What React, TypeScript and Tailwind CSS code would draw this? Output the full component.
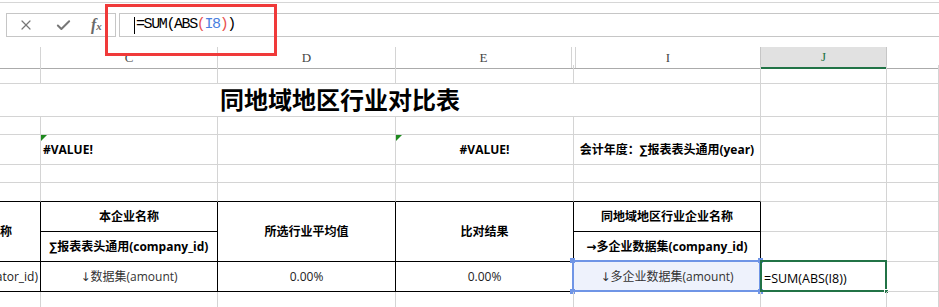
import { X, Check } from 'lucide-react';
import { twMerge } from 'tailwind-merge';

const sans = "font-['Open_Sans','Noto_Sans_CJK_SC',sans-serif]";

function Cell({ className = '', children }: { className?: string; children?: React.ReactNode }) {
  return (
    <div
      className={twMerge(
        'relative flex items-center justify-center overflow-hidden whitespace-nowrap border-r border-b border-[#d4d4d4] text-[12px] text-[#222]',
        className
      )}
    >
      {children}
    </div>
  );
}

function ErrMark() {
  return <span className="absolute left-0 top-0 h-0 w-0 border-t-[6px] border-r-[6px] border-t-[#1f8a1f] border-r-transparent" />;
}

function Handle({ className }: { className: string }) {
  return <span className={twMerge('absolute h-[5px] w-[5px]', className)} />;
}

// narrow arrows, the CJK font draws them full width
function Arrow({ c }: { c: string }) {
  return <span className="font-['DejaVu_Sans',sans-serif]">{c}</span>;
}

export default function App() {
  return (
    <div className={`relative h-[307px] w-[939px] overflow-hidden bg-white ${sans}`}>
      {/* formula bar */}
      <div className="h-[2px]" />
      <div className="h-px bg-[#d6d6d6]" />
      <div className="mt-[10px] flex h-[24px]">
        <div className="ml-[6px] flex w-[110px] items-center border border-[#c6c6c6] text-[#777]">
          <X size={16} strokeWidth={1.8} className="ml-[11px]" />
          <Check size={17} strokeWidth={2.8} className="ml-[21px]" />
          <span className="ml-[19px] font-['Liberation_Serif',serif] text-[16px] font-bold italic leading-none text-[#6a6a6a]">
            f<span className="text-[11px]">x</span>
          </span>
        </div>
        <div className="ml-[3px] flex flex-1 items-center border border-r-0 border-[#c6c6c6] pl-[14px]">
          <span className="mr-px h-[17px] w-px bg-black" />
          <span className="font-['Liberation_Mono',monospace] text-[15px] tracking-[-1.4px] text-black">
            =SUM(ABS<span className="text-[#e8504f]">(</span>
            <span className="text-[#4a7fe0]">I8</span>
            <span className="text-[#e8504f]">)</span>)
          </span>
        </div>
      </div>

      {/* column headers */}
      <div className="mt-[10px] grid h-[18px] grid-cols-[41px_177px_178px_178px_187px_126px_1fr] font-['Liberation_Serif',serif] text-[13px] text-[#444]">
        <div className="border-r border-b border-r-[#d4d4d4] border-b-[#ababab]" />
        <div className="flex items-center justify-center border-r border-b border-r-[#d4d4d4] border-b-[#ababab]">C</div>
        <div className="flex items-center justify-center border-r border-b border-r-[#d4d4d4] border-b-[#ababab]">D</div>
        <div className="flex border-b border-[#ababab]">
          <div className="mr-[2px] flex flex-1 items-center justify-center border-r border-[#d4d4d4]">E</div>
        </div>
        <div className="flex border-r border-b border-r-[#c6c6c6] border-b-[#ababab]">
          <div className="ml-px flex flex-1 items-center justify-center border-l border-[#d4d4d4]">I</div>
        </div>
        <div className="flex items-center justify-center border-r border-b-2 border-r-[#c6c6c6] border-b-[#217346] bg-[#e1e1e1] text-[#217346]">J</div>
        <div className="border-b border-[#ababab]" />
      </div>

      {/* sheet */}
      <div className="grid grid-cols-[41px_177px_178px_178px_187px_126px_1fr] grid-rows-[19px_33px_18px_30px_18px_19px_30px_30px_30px_20px]">
        {/* row 1 */}
        <Cell /><Cell /><Cell /><Cell /><Cell /><Cell /><Cell />

        {/* row 2: title */}
        <Cell className="col-span-5 justify-start pl-[220px] text-[24px] font-bold text-black">同地域地区行业对比表</Cell>
        <Cell /><Cell />

        {/* row 3 */}
        <Cell /><Cell /><Cell /><Cell /><Cell /><Cell /><Cell />

        {/* row 4 */}
        <Cell />
        <Cell className="justify-start pl-[2px] font-bold text-black">
          <ErrMark />#VALUE!
        </Cell>
        <Cell />
        <Cell className="font-bold text-black">
          <ErrMark />#VALUE!
        </Cell>
        <Cell className="font-bold text-black">会计年度：∑报表表头通用(year)</Cell>
        <Cell /><Cell />

        {/* row 5 */}
        <Cell /><Cell /><Cell /><Cell /><Cell /><Cell /><Cell />

        {/* row 6: table top edge */}
        <Cell className="border-b-black" />
        <Cell className="border-b-black" />
        <Cell className="border-b-black" />
        <Cell className="border-b-black" />
        <Cell className="border-b-black" />
        <Cell /><Cell />

        {/* row 7 */}
        <Cell className="row-span-2 justify-end border-black pr-[28px] font-bold text-black">称</Cell>
        <Cell className="border-black font-bold text-black">本企业名称</Cell>
        <Cell className="row-span-2 border-black font-bold text-black">所选行业平均值</Cell>
        <Cell className="row-span-2 border-black font-bold text-black">比对结果</Cell>
        <Cell className="border-black font-bold text-black">同地域地区行业企业名称</Cell>
        <Cell /><Cell />

        {/* row 8 */}
        <Cell className="border-black font-bold text-black">∑报表表头通用(company_id)</Cell>
        <Cell className="border-black font-bold text-black">
          <Arrow c="→" />多企业数据集(company_id)
        </Cell>
        <Cell /><Cell />

        {/* row 9 */}
        <Cell className="justify-end border-black pr-[2px]">ator_id)</Cell>
        <Cell className="border-black text-[#333]">
          <Arrow c="↓" />数据集(amount)
        </Cell>
        <Cell className="border-black">0.00%</Cell>
        <Cell className="border-black">0.00%</Cell>
        <Cell className="overflow-visible border-black bg-[#eef2fc] text-[#333]">
          <Arrow c="↓" />多企业数据集(amount)
          <span className="absolute -left-[2px] -top-[2px] -right-[1px] -bottom-[1px] border-2 border-[#6f95e6]" />
          <Handle className="-left-[4px] -top-[4px] bg-[#6f95e6]" />
          <Handle className="-right-[3px] -top-[4px] bg-[#6f95e6]" />
          <Handle className="-left-[4px] -bottom-[3px] bg-[#6f95e6]" />
          <Handle className="-right-[3px] -bottom-[3px] bg-[#6f95e6]" />
        </Cell>
        <Cell className="items-end justify-start overflow-visible pb-[2px] pl-[3px] text-[12.5px] text-black">
          =SUM(ABS(I8))
          <span className="absolute -left-[1px] -top-[2px] -right-[1px] -bottom-[1px] border-2 border-[#217346]" />
          <Handle className="-right-[3px] -bottom-[3px] border border-white bg-[#217346]" />
        </Cell>
        <Cell />

        {/* row 10 */}
        <Cell /><Cell /><Cell /><Cell /><Cell /><Cell /><Cell />
      </div>

      {/* annotation */}
      <div className="absolute left-[105px] top-[4px] h-[52px] w-[172px] border-[3px] border-[#f03a3a]" />
    </div>
  );
}
